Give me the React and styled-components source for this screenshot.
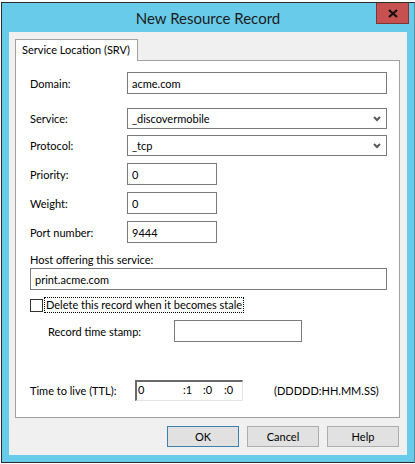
import React from 'react';
import styled, { createGlobalStyle } from 'styled-components';

const GlobalStyle = createGlobalStyle`
  html, body {
    margin: 0;
    padding: 0;
    background: #ffffff;
  }
  body {
    font-family: Lato, "Liberation Sans", Arial, sans-serif;
    font-size: 11px;
    color: #000;
  }
`;

const Window = styled.div`
  margin: 2px 0 0 1px;
  width: 398px;
  border: 1px solid #2b2b2b;
  border-right-color: #5d8ea0;
  background: #69cbea;
  padding: 0 7px 7px 7px;
`;

const TitleBar = styled.div`
  height: 29px;
  display: grid;
  grid-template-columns: 1fr auto 1fr;
  margin: 0 -7px;
`;

const Title = styled.div`
  grid-column: 2;
  align-self: center;
  font-size: 15px;
  color: #1b1b1b;
  padding-top: 1px;
`;

const CloseButton = styled.div`
  grid-column: 3;
  justify-self: end;
  align-self: start;
  margin-right: 5px;
  width: 31px;
  height: 20px;
  background: #c75050;
  border: 1px solid #7d3535;
  border-top: none;
  display: flex;
  align-items: center;
  justify-content: center;
`;

const Client = styled.div`
  background: #f0f0f0;
  height: 423px;
  padding: 7px 7px 0 6px;
  box-sizing: border-box;
`;

const TabStrip = styled.div`
  display: flex;
  height: 21px;
`;

const Tab = styled.div`
  width: 123px;
  height: 22px;
  background: #ffffff;
  border: 1px solid #a0a0a0;
  border-bottom: none;
  padding-left: 6px;
  box-sizing: border-box;
  line-height: 19px;
  white-space: nowrap;
  position: relative;
  z-index: 1;
  margin-bottom: -1px;
`;

const Panel = styled.div`
  width: 385px;
  height: 358px;
  box-sizing: border-box;
  background: #ffffff;
  border: 1px solid #a0a0a0;
  padding: 11px 12px 0 14px;
  display: flex;
  flex-direction: column;
`;

const Row = styled.div`
  display: flex;
  align-items: center;
  margin-top: ${p => p.$mt || 0}px;
`;

const Label = styled.div`
  width: ${p => p.$w || 97}px;
  padding-left: ${p => p.$indent || 0}px;
  box-sizing: border-box;
  flex: none;
`;

const TextBox = styled.div`
  height: 22px;
  box-sizing: border-box;
  width: ${p => (p.$w ? `${p.$w}px` : 'auto')};
  flex: ${p => (p.$w ? 'none' : '1')};
  border: 1px solid #7a7a7a;
  background: #fff;
  padding: 0 4px;
  display: flex;
  align-items: center;
`;

const Select = styled(TextBox)`
  height: 21px;
  justify-content: space-between;
  padding-right: 5px;
`;

const HostLabel = styled.div`
  margin-top: 10px;
`;

const CheckRow = styled.div`
  display: flex;
  align-items: center;
  margin-top: 8px;
  height: 14px;
`;

const CheckBox = styled.div`
  width: 13px;
  height: 13px;
  box-sizing: border-box;
  border: 1px solid #333;
  background: #fff;
  margin-right: 2px;
`;

const FocusLabel = styled.div`
  outline: 1px dotted #000;
  padding: 0 1px;
  line-height: 14px;
`;

const TtlBox = styled.div`
  width: 108px;
  height: 21px;
  box-sizing: border-box;
  border-top: 2px solid #6a6a6a;
  border-left: 2px solid #6a6a6a;
  border-right: 1px solid #e3e3e3;
  border-bottom: 1px solid #e3e3e3;
  background: #fff;
  position: relative;
  margin-right: 31px;
`;

const TtlPart = styled.span`
  position: absolute;
  top: 1px;
  left: ${p => p.$x}px;
`;

const Format = styled.div``;

const ButtonBar = styled.div`
  display: flex;
  justify-content: flex-end;
  gap: 8px;
  margin-top: 8px;
  padding-right: 1px;
`;

const Button = styled.div`
  width: 72px;
  height: 21px;
  box-sizing: border-box;
  border: 1px solid ${p => (p.$default ? '#3c7fb1' : '#adadad')};
  background: #e1e1e1;
  display: flex;
  align-items: center;
  justify-content: center;
`;

const Chevron = () => (
  <svg width="8" height="6" viewBox="0 0 8 6">
    <polyline points="1,1 4,4 7,1" fill="none" stroke="#5a5a5a" strokeWidth="2" />
  </svg>
);

const CloseIcon = () => (
  <svg width="10" height="9" viewBox="0 0 10 9">
    <path d="M1 1 L9 8 M9 1 L1 8" stroke="#111" strokeWidth="2.2" />
  </svg>
);

export default function App() {
  return (
    <>
      <GlobalStyle />
      <Window>
        <TitleBar>
          <Title>New Resource Record</Title>
          <CloseButton><CloseIcon /></CloseButton>
        </TitleBar>
        <Client>
          <TabStrip>
            <Tab>Service Location (SRV)</Tab>
          </TabStrip>
          <Panel>
            <Row>
              <Label>Domain:</Label>
              <TextBox>acme.com</TextBox>
            </Row>
            <Row $mt={14}>
              <Label>Service:</Label>
              <Select>_discovermobile<Chevron /></Select>
            </Row>
            <Row $mt={6}>
              <Label>Protocol:</Label>
              <Select>_tcp<Chevron /></Select>
            </Row>
            <Row $mt={7}>
              <Label>Priority:</Label>
              <TextBox $w={90}>0</TextBox>
            </Row>
            <Row $mt={7}>
              <Label>Weight:</Label>
              <TextBox $w={90}>0</TextBox>
            </Row>
            <Row $mt={7}>
              <Label>Port number:</Label>
              <TextBox $w={90}>9444</TextBox>
            </Row>
            <HostLabel>Host offering this service:</HostLabel>
            <Row $mt={2}>
              <TextBox>print.acme.com</TextBox>
            </Row>
            <CheckRow>
              <CheckBox />
              <FocusLabel>Delete this record when it becomes stale</FocusLabel>
            </CheckRow>
            <Row $mt={8}>
              <Label $w={144} $indent={18}>Record time stamp:</Label>
              <TextBox $w={128} />
            </Row>
            <Row $mt={38}>
              <Label $w={105}>Time to live (TTL):</Label>
              <TtlBox>
                <TtlPart $x={1}>0</TtlPart>
                <TtlPart $x={46}>:1</TtlPart>
                <TtlPart $x={66}>:0</TtlPart>
                <TtlPart $x={87}>:0</TtlPart>
              </TtlBox>
              <Format>(DDDDD:HH.MM.SS)</Format>
            </Row>
          </Panel>
          <ButtonBar>
            <Button $default>OK</Button>
            <Button>Cancel</Button>
            <Button>Help</Button>
          </ButtonBar>
        </Client>
      </Window>
    </>
  );
}
